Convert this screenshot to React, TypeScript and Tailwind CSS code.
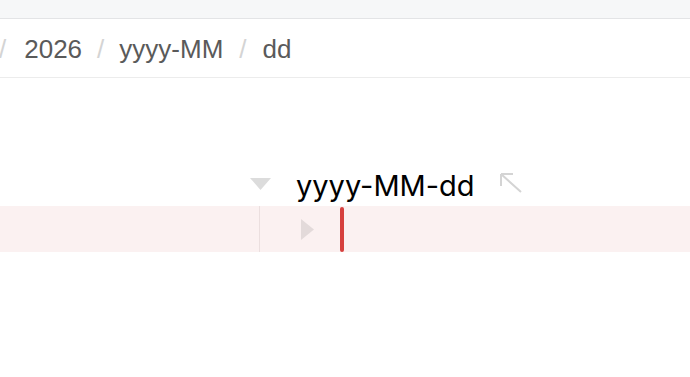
export default function App() {
  const crumb = { fontFamily: '"Liberation Sans", Arial, sans-serif' };
  return (
    <div className="w-[690px] h-[377px] bg-white overflow-hidden flex flex-col">
      <div className="h-[19px] shrink-0 bg-[#f6f7f8] border-b border-[#e3e4e6]" />
      <div
        className="h-[59px] shrink-0 border-b border-[#ececec] flex items-center pt-[3px] text-[26px] text-[#5a5a5a]"
        style={crumb}
      >
        <span className="text-[#d4d4d4] ml-[-1px] mr-[18px]">/</span>
        <span>2026</span>
        <span className="text-[#d4d4d4] mx-[15px]">/</span>
        <span>yyyy-MM</span>
        <span className="text-[#d4d4d4] mx-[16px]">/</span>
        <span>dd</span>
      </div>
      <div className="h-[86px] shrink-0" />
      <div className="h-[42px] shrink-0 flex items-center pl-[250px]">
        <svg width="21" height="12" viewBox="0 0 21 12" className="mt-[-2px]">
          <polygon points="0,0 21,0 10.5,12" fill="#dcdcdc" />
        </svg>
        <span
          className="ml-[25px] text-[29px] text-black leading-none"
          style={{ fontFamily: 'Inter, "Liberation Sans", sans-serif' }}
        >
          yyyy-MM-dd
        </span>
        <svg width="24" height="22" viewBox="0 0 24 22" className="ml-[24px] mt-[-4px]">
          <path d="M2 2 L22 20 M2 2 L14 2 M2 2 L2 14" stroke="#d4d4d4" strokeWidth="2" fill="none" />
        </svg>
      </div>
      <div className="h-[46px] shrink-0 bg-[#fbf1f1] flex">
        <div className="w-[260px] shrink-0 border-r border-[#ebdfdf]" />
        <div className="flex items-center pl-[41px]">
          <svg width="13" height="21" viewBox="0 0 13 21">
            <polygon points="0,0 13,10.5 0,21" fill="#e3dada" />
          </svg>
          <div className="ml-[26px] w-[4px] h-[45px] self-start mt-[1px] rounded-full bg-[#d6403e]" />
        </div>
      </div>
    </div>
  );
}
